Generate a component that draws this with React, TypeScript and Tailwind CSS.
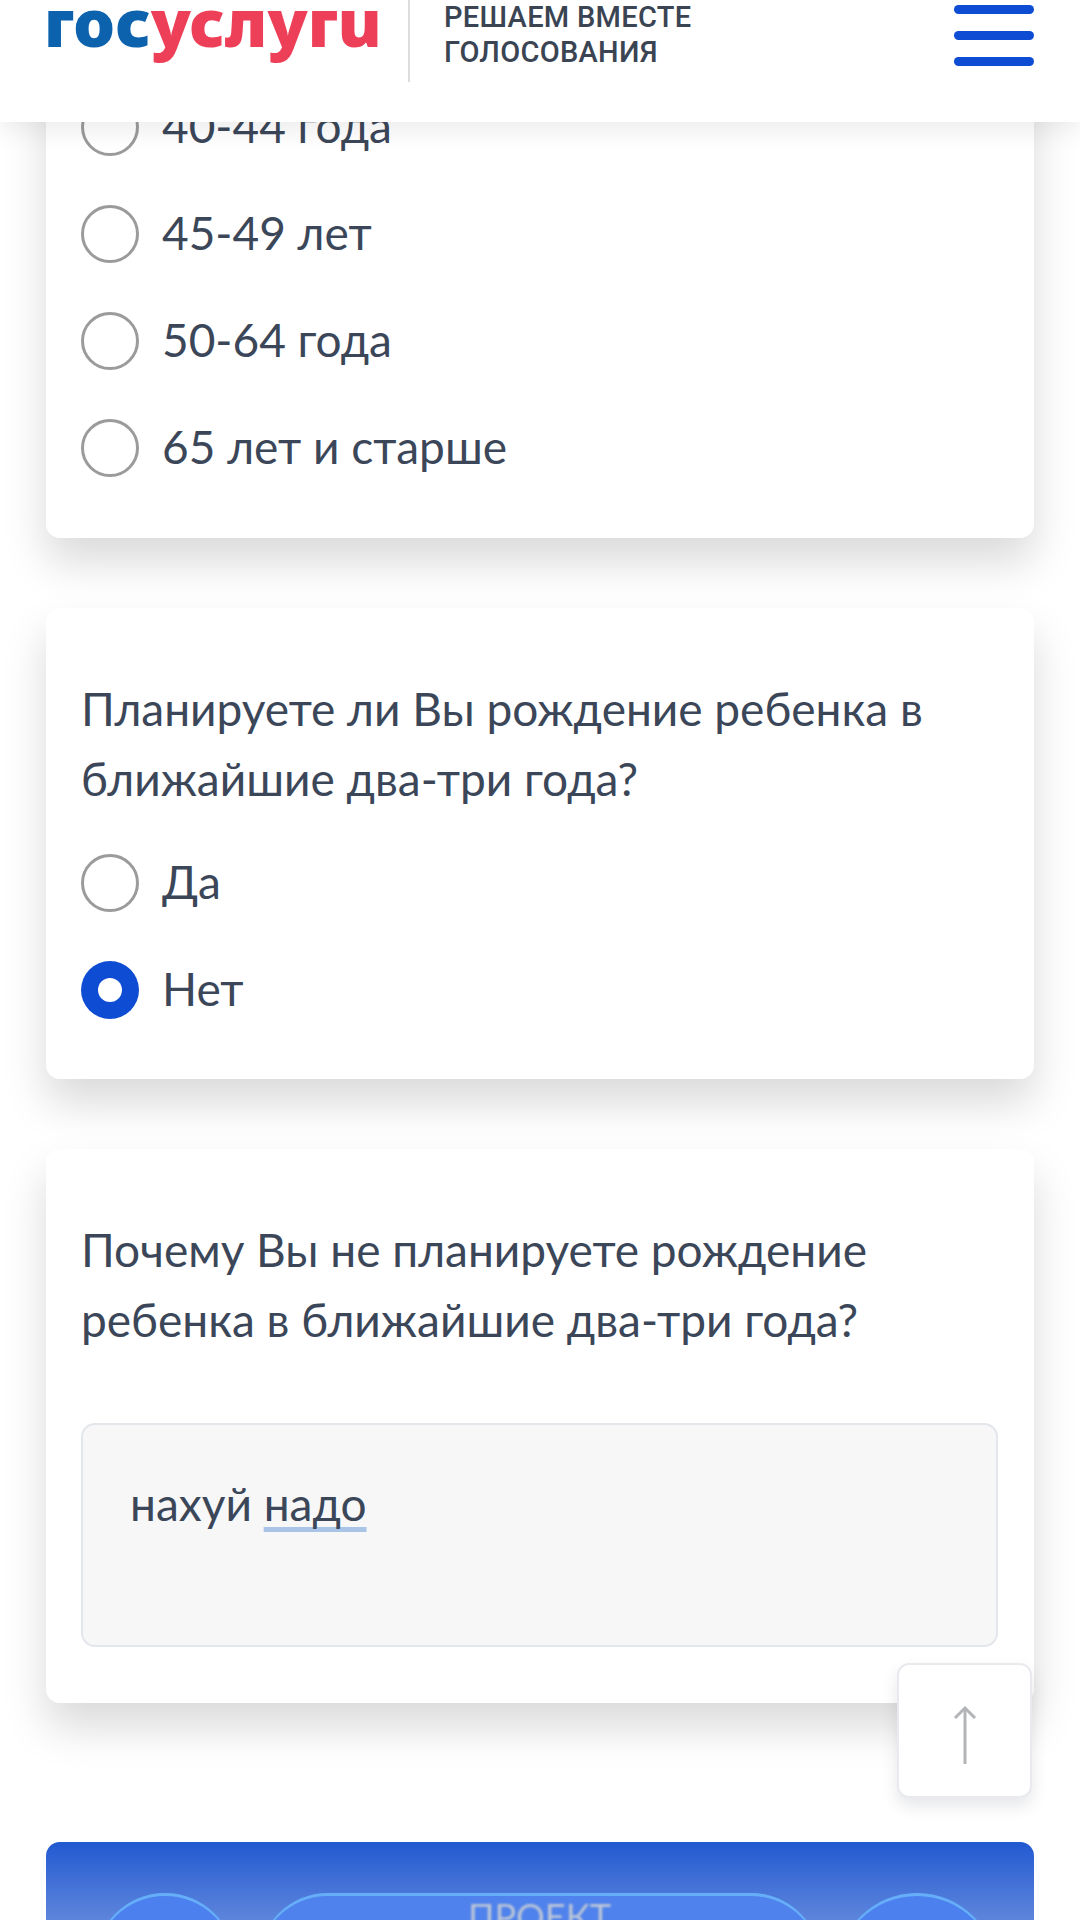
const font = "font-['Lato','Noto_Sans',sans-serif]";

function Radio({ label, checked = false }: { label: string; checked?: boolean }) {
  return (
    <div className="flex h-[107px] items-center gap-[23px]">
      {checked ? (
        <span className="flex h-[58px] w-[58px] items-center justify-center rounded-full bg-[#0d4cd3]">
          <span className="h-[24px] w-[24px] rounded-full bg-white" />
        </span>
      ) : (
        <span className="h-[58px] w-[58px] rounded-full border-[3px] border-[#9b9b9b] bg-white" />
      )}
      <span className="-mt-[2px] text-[46px] leading-none text-[#3b4759]">{label}</span>
    </div>
  );
}

function Card({ children, className = "" }: { children: React.ReactNode; className?: string }) {
  return (
    <section className={`rounded-[14px] bg-white pl-[35px] pr-[36px] shadow-[0_24px_44px_rgba(0,0,0,0.15)] ${className}`}>
      {children}
    </section>
  );
}

function Logo() {
  return (
    <div className="flex items-baseline text-[66px] font-black leading-none tracking-[0px] font-['Noto_Sans',sans-serif]">
      <span className="text-[#0d62ad]">гос</span>
      <span className="text-[#ee3f58]">услугu</span>
    </div>
  );
}

export default function App() {
  return (
    <div className={`relative h-[1920px] w-[1080px] overflow-hidden bg-white ${font}`}>
      <header className="relative z-10 flex h-[122px] items-start bg-white pl-[44px] pr-[46px] shadow-[0_8px_24px_rgba(0,0,0,0.08)]">
        <div className="mt-[-12px] w-[364px]"><Logo /></div>
        <div className="h-[82px] w-[2px] bg-[#dcdcdc]" />
        <div className="ml-[34px] font-['Roboto',sans-serif] text-[29px] font-medium leading-[35px] tracking-[0.3px] text-[#3a4452]">
          <div>РЕШАЕМ ВМЕСТЕ</div>
          <div>ГОЛОСОВАНИЯ</div>
        </div>
        <div className="ml-auto mt-[5px] flex w-[80px] flex-col gap-[17px]">
          <span className="h-[9px] rounded-full bg-[#0d4cd3]" />
          <span className="h-[9px] rounded-full bg-[#0d4cd3]" />
          <span className="h-[9px] rounded-full bg-[#0d4cd3]" />
        </div>
      </header>

      <main className="-mt-[119px] flex flex-col gap-[70px] px-[46px]">
        <Card className="pt-[70px] pb-[37px]">
          <Radio label="40-44 года" />
          <Radio label="45-49 лет" />
          <Radio label="50-64 года" />
          <Radio label="65 лет и старше" />
        </Card>

        <Card className="pt-[66px] pb-[36px]">
          <h2 className="text-[46px] font-normal leading-[70px] text-[#3b4759]">
            Планируете ли Вы рождение ребенка в ближайшие два-три года?
          </h2>
          <div className="mt-[15px]">
            <Radio label="Да" />
            <Radio label="Нет" checked />
          </div>
        </Card>

        <Card className="pt-[66px] pb-[56px]">
          <h2 className="text-[46px] font-normal leading-[70px] text-[#3b4759]">
            Почему Вы не планируете рождение ребенка в ближайшие два-три года?
          </h2>
          <div className="mt-[68px] h-[224px] rounded-[14px] border-2 border-[#e3e6eb] bg-[#f7f7f8] px-[47px] pt-[49px] text-[46px] leading-[60px] text-[#3b4759]">
            нахуй{" "}
            <span className="underline decoration-[#a9c4e6] decoration-[5px] underline-offset-[6px] [text-decoration-skip-ink:none]">надо</span>
          </div>
        </Card>

        <div className="mt-[69px] h-[200px] rounded-t-[14px] bg-gradient-to-b from-[#2159d0] to-[#5f86dc] to-[40%]">
          <div className="flex items-start pl-[49px] pt-[51px]">
            <span className="h-[140px] w-[140px] rounded-full bg-[#4b80ee] shadow-[inset_0_3px_0_#66aef7]" />
            <div className="ml-[23px] flex h-[120px] w-[563px] justify-center rounded-t-[70px] bg-[#4f82ec] pt-[5px] text-[36px] leading-none text-[#b9c4d8] shadow-[inset_0_3px_0_#66aef7]">
              <span className="blur-[1px]">ПРОЕКТ</span>
            </div>
            <span className="ml-[16px] h-[160px] w-[160px] rounded-full bg-[#4b80ee] shadow-[inset_0_3px_0_#66aef7]" />
          </div>
        </div>
      </main>

      <button className="absolute left-[897px] top-[1663px] flex h-[135px] w-[135px] items-center justify-center rounded-[12px] border-2 border-[#e8eaee] bg-white shadow-[0_8px_16px_rgba(40,50,70,0.12)]">
        <svg className="mt-[8px]" width="24" height="60" viewBox="0 0 24 60" fill="none" stroke="#b2b4b8" strokeWidth="3">
          <path d="M12 3V59" />
          <path d="M2 13L12 3L22 13" />
        </svg>
      </button>
    </div>
  );
}
